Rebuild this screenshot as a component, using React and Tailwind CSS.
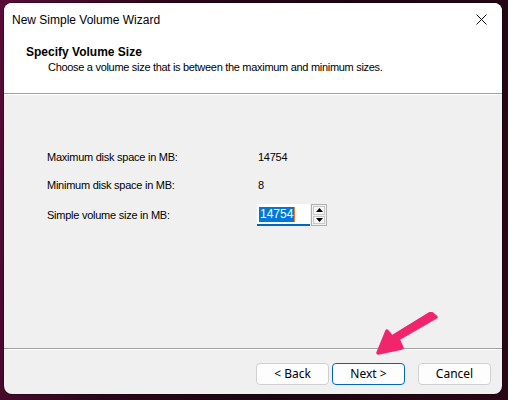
export default function App() {
  const ui = { fontFamily: '"Liberation Sans", Arial, sans-serif' }
  return (
    <div
      className="relative h-[400px] w-[508px] overflow-hidden bg-[linear-gradient(100deg,#5a0c38_0%,#2a0619_30%,#1c0511_60%,#2a0716_100%)] pt-[3px] pl-[4px]"
      style={ui}
    >
      <div className="flex h-[391px] w-[498px] flex-col overflow-hidden rounded-[8px] bg-[#f0f0f0] shadow-[0_0_0_1px_rgba(0,0,0,0.3)]">
        {/* header */}
        <div className="h-[90px] bg-white">
          <div className="flex h-[33px] items-center justify-between pl-[8px] pr-[10px]">
            <span className="text-[12px] text-black">New Simple Volume Wizard</span>
            <svg width="11" height="11" viewBox="0 0 11 11" className="mr-[5px]">
              <path d="M0.5 0.5 L10.5 10.5 M10.5 0.5 L0.5 10.5" stroke="#111" strokeWidth="1" />
            </svg>
          </div>
          <div className="pl-[22px] pt-[9px]">
            <div className="text-[12px] font-bold leading-[15px] text-black">Specify Volume Size</div>
            <div className="pl-[22px] text-[11px] leading-[15px] tracking-[-0.3px] text-black">
              Choose a volume size that is between the maximum and minimum sizes.
            </div>
          </div>
        </div>
        <div className="h-[1px] bg-[#a0a0a0]" />
        <div className="h-[1px] bg-white" />

        {/* body */}
        <div className="flex-1 pl-[43px] pt-[48px] text-[11px] tracking-[-0.25px] text-black">
          <div className="flex h-[28px] items-center">
            <span className="w-[211px]">Maximum disk space in MB:</span>
            <span>14754</span>
          </div>
          <div className="flex h-[29px] items-center">
            <span className="w-[211px]">Minimum disk space in MB:</span>
            <span>8</span>
          </div>
          <div className="flex h-[30px] items-center">
            <span className="w-[210px]">Simple volume size in MB:</span>
            <div className="flex h-[22px] items-stretch">
              <div className="flex w-[53px] items-center border-b-2 border-[#0067c0] bg-white pl-[2px]">
                <span className="bg-[#0078d7] px-[1px] text-[12px] leading-[15px] tracking-normal text-white">14754</span>
                <span className="h-[15px] w-[1px] bg-[#f08020]" />
              </div>
              <div className="ml-[1px] flex w-[16px] flex-col gap-[1px] border border-[#b0b0b0] bg-[#f0f0f0] p-[1px]">
                <div className="flex flex-1 items-center justify-center border border-[#c8c8c8] bg-[#f5f5f5]">
                  <svg width="7" height="4" viewBox="0 0 7 4"><path d="M3.5 0 L7 4 L0 4 Z" fill="#000" /></svg>
                </div>
                <div className="flex flex-1 items-center justify-center border border-[#c8c8c8] bg-[#f5f5f5]">
                  <svg width="7" height="4" viewBox="0 0 7 4"><path d="M0 0 L7 0 L3.5 4 Z" fill="#000" /></svg>
                </div>
              </div>
            </div>
          </div>
        </div>

        {/* footer */}
        <div className="h-[1px] bg-[#a0a0a0]" />
        <div className="h-[1px] bg-white" />
        <div className="flex h-[44px] items-start justify-end gap-[3px] pr-[11px] pt-[13px] text-[12px]" style={{ fontFamily: '"Noto Sans", sans-serif' }}>
          <button className="h-[22px] w-[73px] rounded-[4px] border border-[#d0d0d0] bg-[#fdfdfd] leading-[20px] text-black">
            &lt; Back
          </button>
          <button className="h-[22px] w-[73px] rounded-[4px] border border-[#0067c0] bg-[#fdfdfd] leading-[20px] text-black">
            Next &gt;
          </button>
          <button className="ml-[10px] h-[22px] w-[73px] rounded-[4px] border border-[#d0d0d0] bg-[#fdfdfd] leading-[20px] text-black">
            Cancel
          </button>
        </div>
      </div>

      {/* annotation arrow */}
      <svg className="absolute left-[370px] top-[312px]" width="72" height="46" viewBox="0 0 72 46">
        <path
          d="M66 5 L28 27 L32 36 L8 41 L17 19 L22 25 L61 1 Z"
          fill="#f0256c"
          stroke="#f0256c"
          strokeWidth="3.5"
          strokeLinejoin="round"
        />
      </svg>
    </div>
  )
}
